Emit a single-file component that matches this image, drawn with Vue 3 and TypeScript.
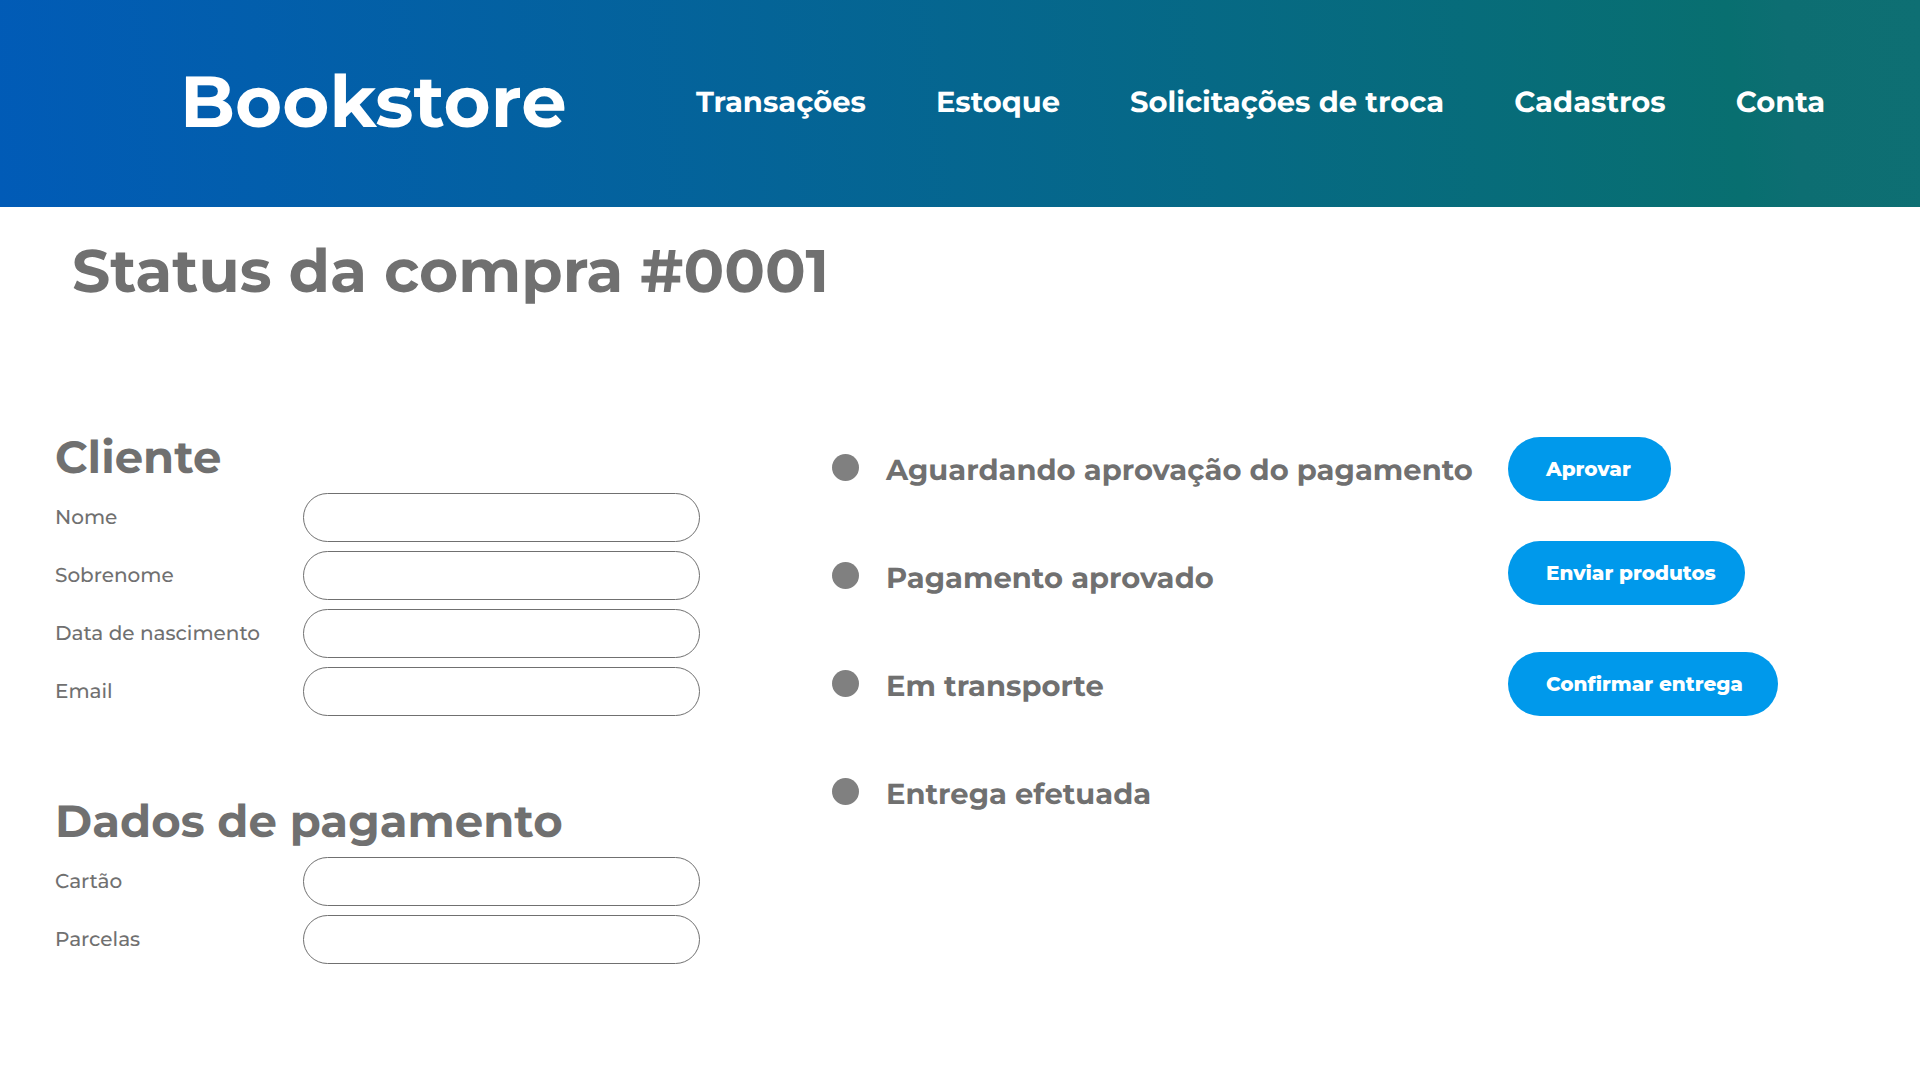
<script setup lang="ts">
interface Field {
  id: string
  label: string
  type: string
}

interface Action {
  label: string
  size: string
}

const links: string[] = ['Transações', 'Estoque', 'Solicitações de troca', 'Cadastros', 'Conta']

const clientFields: Field[] = [
  { id: 'nome', label: 'Nome', type: 'text' },
  { id: 'sobrenome', label: 'Sobrenome', type: 'text' },
  { id: 'nascimento', label: 'Data de nascimento', type: 'text' },
  { id: 'email', label: 'Email', type: 'email' },
]

const paymentFields: Field[] = [
  { id: 'cartao', label: 'Cartão', type: 'text' },
  { id: 'parcelas', label: 'Parcelas', type: 'text' },
]

const steps: string[] = [
  'Aguardando aprovação do pagamento',
  'Pagamento aprovado',
  'Em transporte',
  'Entrega efetuada',
]

const actions: Action[] = [
  { label: 'Aprovar', size: 'small' },
  { label: 'Enviar produtos', size: 'medium' },
  { label: 'Confirmar entrega', size: 'large' },
]
</script>

<template>
  <div class="page">
    <header class="header">
      <a class="brand" href="#">Bookstore</a>
      <nav class="nav">
        <a v-for="link in links" :key="link" class="nav-link" href="#">{{ link }}</a>
      </nav>
    </header>

    <main class="main">
      <h1 class="title">Status da compra #0001</h1>

      <div class="content">
        <form class="details" @submit.prevent>
          <section class="group">
            <h2 class="subtitle">Cliente</h2>
            <div v-for="field in clientFields" :key="field.id" class="field">
              <label class="label" :for="field.id">{{ field.label }}</label>
              <input :id="field.id" class="input" :type="field.type" />
            </div>
          </section>
          <section class="group">
            <h2 class="subtitle">Dados de pagamento</h2>
            <div v-for="field in paymentFields" :key="field.id" class="field">
              <label class="label" :for="field.id">{{ field.label }}</label>
              <input :id="field.id" class="input" :type="field.type" />
            </div>
          </section>
        </form>

        <ol class="steps">
          <li v-for="step in steps" :key="step" class="step">
            <span class="dot"></span>
            <span class="step-text">{{ step }}</span>
          </li>
        </ol>

        <div class="actions">
          <button
            v-for="action in actions"
            :key="action.label"
            type="button"
            class="button"
            :class="action.size"
          >
            {{ action.label }}
          </button>
        </div>
      </div>
    </main>
  </div>
</template>

<style>
body {
  margin: 0;
  background: #fff;
}
</style>

<style scoped>
.page {
  font-family: Montserrat, Inter, 'Open Sans', sans-serif;
  font-variant-ligatures: none;
  color: #707070;
  text-rendering: geometricPrecision;
}

.header {
  display: flex;
  align-items: center;
  box-sizing: border-box;
  height: 207px;
  padding: 0 64px 4px 180px;
  background: linear-gradient(85deg, #015bb7 0%, #086f70 90%, #0d6e72 93%, #0e6f73 100%);
}

.brand {
  flex: 0 0 516px;
  color: #fff;
  font-size: 72px;
  font-weight: 700;
  line-height: 88px;
  text-decoration: none;
}

.nav {
  display: flex;
  gap: 70px;
  padding-top: 2px;
}

.nav-link {
  color: #fff;
  font-size: 29px;
  font-weight: 700;
  line-height: 36px;
  text-decoration: none;
  white-space: nowrap;
}

.title {
  margin: 0;
  padding: 29px 72px 0;
  font-size: 60px;
  font-weight: 700;
  line-height: 72px;
}

.content {
  display: grid;
  grid-template-columns: 777px 676px auto;
  justify-content: start;
  padding: 126px 55px 0;
}

.details {
  display: flex;
  flex-direction: column;
  gap: 82px;
}

.group {
  display: flex;
  flex-direction: column;
  gap: 9px;
}

.subtitle {
  margin: 0 0 2px;
  font-size: 45px;
  font-weight: 700;
  line-height: 48px;
}

.field {
  display: grid;
  grid-template-columns: 248px 397px;
  align-items: center;
}

.label {
  font-size: 20px;
  font-weight: 500;
  line-height: 24px;
}

.input {
  box-sizing: border-box;
  width: 100%;
  height: 49px;
  padding: 0 24px;
  border: 1px solid #707070;
  border-radius: 25px;
  background: #fff;
  color: inherit;
  font: inherit;
  font-size: 20px;
}

.steps {
  display: flex;
  flex-direction: column;
  gap: 72px;
  margin: 0;
  padding: 19px 0 0;
  list-style: none;
}

.step {
  display: flex;
  align-items: flex-start;
  gap: 27px;
}

.dot {
  flex: none;
  width: 27px;
  height: 27px;
  margin-top: 1px;
  border-radius: 50%;
  background: #808080;
}

.step-text {
  font-size: 29px;
  font-weight: 700;
  line-height: 36px;
  white-space: nowrap;
}

.actions {
  display: grid;
  grid-template-rows: 104px 111px 64px;
  align-content: start;
  justify-items: start;
  padding-top: 3px;
}

.button {
  height: 64px;
  padding: 0 0 0 38px;
  border: 0;
  border-radius: 32px;
  background: #0099eb;
  color: #fff;
  font: inherit;
  font-size: 20px;
  font-weight: 800;
  line-height: 24px;
  text-align: left;
  white-space: nowrap;
  cursor: pointer;
}

.small {
  width: 163px;
}

.medium {
  width: 237px;
}

.large {
  width: 270px;
}
</style>
